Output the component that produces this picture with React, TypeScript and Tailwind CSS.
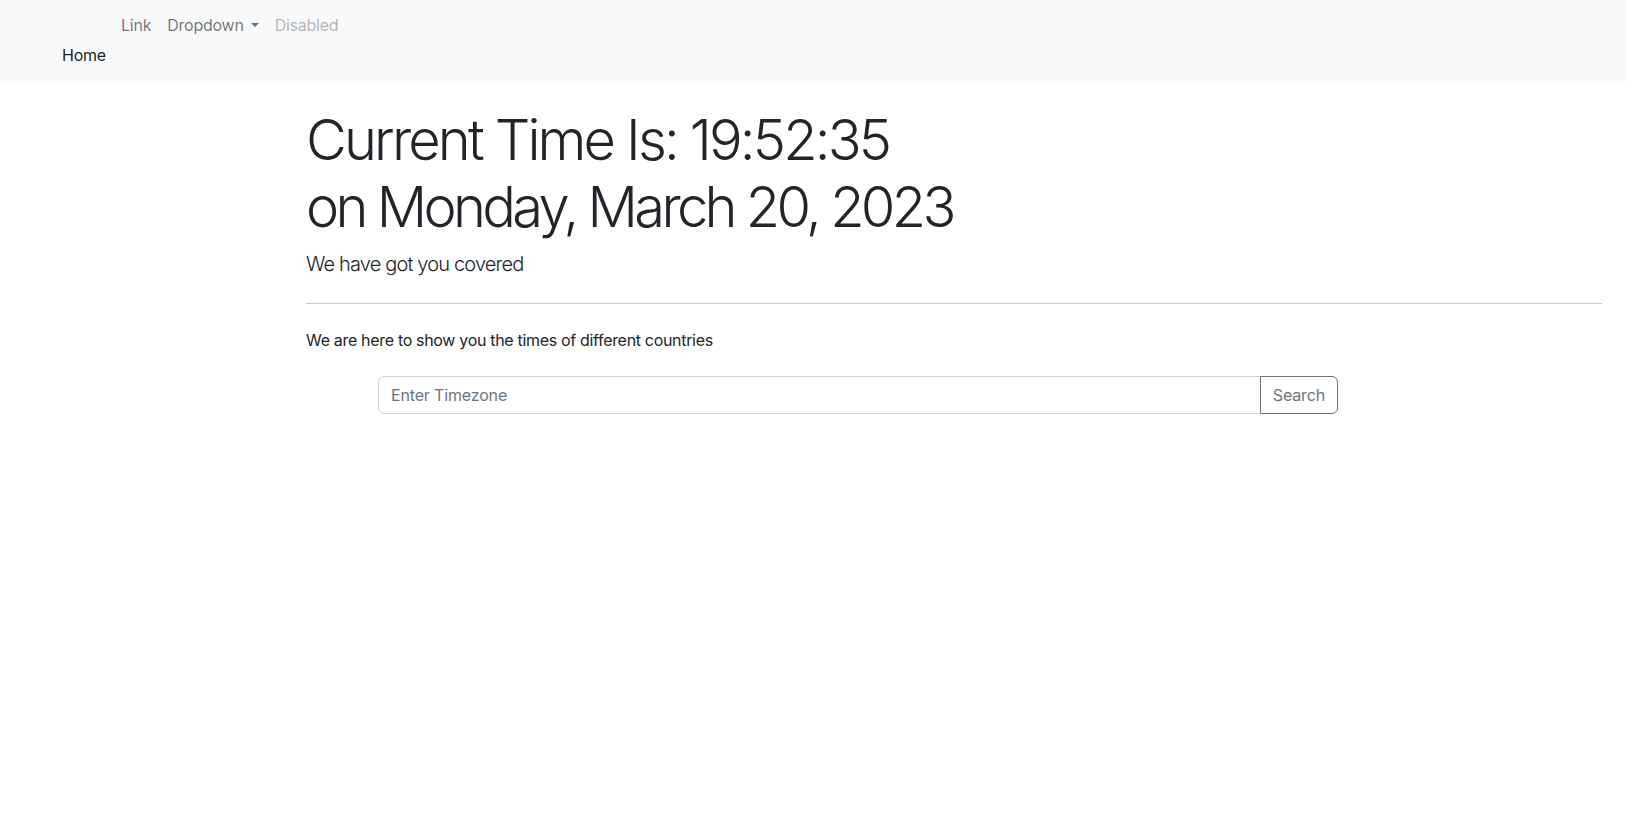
import React from 'react';

const font = { fontFamily: 'Inter, "Liberation Sans", sans-serif' };

const App = () => {
  return (
    <div className="min-h-[821px] bg-white text-[#212529]" style={font}>
      <nav className="h-[83px] bg-[#f8f9fa] tracking-[-0.015em]">
        <ul className="flex pl-[113px] pt-[13px] text-base leading-6">
          <li>
            <a className="px-2 text-black/55">Link</a>
          </li>
          <li>
            <a className="px-2 text-black/55">
              Dropdown
              <span className="ml-[7px] inline-block align-[0.255em] border-x-[4.8px] border-t-[4.8px] border-x-transparent border-t-current" />
            </a>
          </li>
          <li>
            <a className="px-2 text-black/30">Disabled</a>
          </li>
        </ul>
        <a className="mt-[6px] block pl-[62px] text-base leading-6 text-black/90">Home</a>
      </nav>

      <main className="pl-[306px] pr-[24px]">
        <h1 className="mt-6 text-[56px] font-light leading-[1.2]">
          <span className="block tracking-[-0.051em]">Current Time Is: 19:52:35</span>
          <span className="block tracking-[-0.066em]">on Monday, March 20, 2023</span>
        </h1>
        <p className="mt-2 text-xl font-light leading-[30px] tracking-[-0.042em]">We have got you covered</p>
        <hr className="mt-6 border-t border-[#c8c9ca]" />
        <p className="mt-6 text-base leading-6 tracking-[-0.02em] text-[#212529]">
          We are here to show you the times of different countries
        </p>
        <div className="mt-6 ml-[72px] flex w-[960px]">
          <input
            type="text"
            placeholder="Enter Timezone"
            className="h-[38px] flex-1 rounded-l-[6px] border border-[#ced4da] px-3 text-base tracking-[-0.01em] text-[#212529] outline-none placeholder:text-[#6c757d]"
          />
          <button className="-ml-px h-[38px] rounded-r-[6px] border border-[#6c757d] px-3 text-base tracking-[-0.01em] text-[#6c757d]">
            Search
          </button>
        </div>
      </main>
    </div>
  );
};

export default App;
